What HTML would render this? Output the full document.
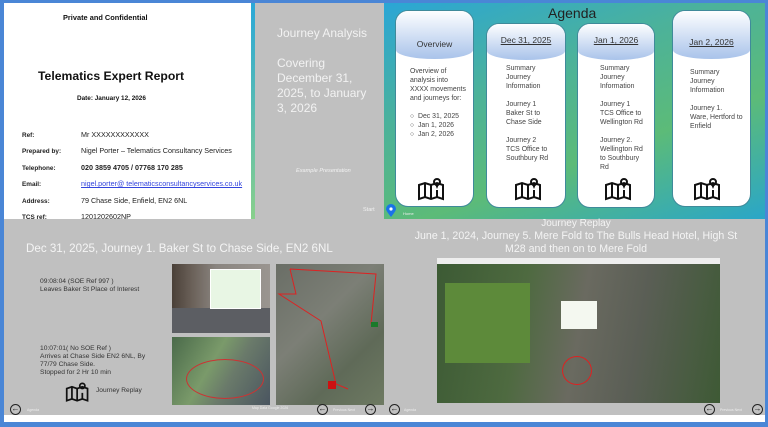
<!DOCTYPE html>
<html><head><meta charset="utf-8"><style>
*{margin:0;padding:0;box-sizing:border-box}
body{width:768px;height:427px;overflow:hidden;background:#4a86d6;font-family:"Liberation Sans",sans-serif;position:relative}
.a{position:absolute}
.s1{left:4px;top:3px;width:247px;height:219px;background:#fff}
.s1 .r{position:absolute;left:18px;font-size:7.2px;color:#222;white-space:nowrap}
.s1 .r b{display:inline-block;width:59px;font-size:6.4px}
.strip{left:251px;top:3px;width:4px;height:219px;background:linear-gradient(#2aa8d8,#8ad08a)}
.s2{left:255px;top:3px;width:129px;height:216px;background:#c0c0c0;color:#f2f2f2}
.s3{left:384px;top:3px;width:381px;height:216px;background:linear-gradient(160deg,#2aa6d6 0%,#4cb29a 35%,#5cbb78 65%,#2aa6c8 100%)}
.card{position:absolute;background:#fff;border:1px solid #3f8a9a;border-radius:13px;overflow:hidden}
.card .h{position:absolute;left:0;right:0;top:0;height:46px;background:linear-gradient(#fdfeff,#a9c3ea);border-radius:0 0 50% 50%/0 0 9px 9px}
.card .t{position:absolute;left:0;right:0;text-align:center;font-size:8.5px;color:#333}
.card .b{position:absolute;font-size:6.9px;color:#444;line-height:9px;white-space:nowrap}
.gray{left:4px;top:219px;width:761px;height:196px;background:#c0c0c0}
.white{left:4px;top:415px;width:761px;height:7px;background:#fff}
.arr{position:absolute;width:11px;height:11px;border:1.3px solid #222;border-radius:50%;font-size:8px;line-height:8px;text-align:center;color:#222;font-weight:bold}
.sm{position:absolute;font-size:3.5px;color:#eee}
</style></head><body>
<div class="a s1">
 <div class="a" style="left:59px;top:10px;font-size:7.4px;font-weight:bold;color:#111">Private and Confidential</div>
 <div class="a" style="left:34px;top:66px;font-size:12.2px;font-weight:bold;color:#111">Telematics Expert Report</div>
 <div class="a" style="left:73px;top:92px;font-size:6.4px;font-weight:bold;color:#111">Date: January 12, 2026</div>
 <div class="r" style="top:127px"><b>Ref:</b>Mr XXXXXXXXXXXX</div>
 <div class="r" style="top:143px"><b>Prepared by:</b>Nigel Porter – Telematics Consultancy Services</div>
 <div class="r" style="top:160px"><b>Telephone:</b><span style="font-weight:bold">020 3859 4705 / 07768 170 285</span></div>
 <div class="r" style="top:176px"><b>Email:</b><span style="color:#3344dd;text-decoration:underline">nigel.porter@ telematicsconsultancyservices.co.uk</span></div>
 <div class="r" style="top:193px"><b>Address:</b>79 Chase Side, Enfield, EN2 6NL</div>
 <div class="r" style="top:209px"><b>TCS ref:</b>1201202602NP</div>
</div>
<div class="a strip"></div>
<div class="a s2">
 <div class="a" style="left:22px;top:23px;font-size:12px">Journey Analysis</div>
 <div class="a" style="left:22px;top:53px;font-size:12px;line-height:15px;width:102px">Covering December 31, 2025, to January 3, 2026</div>
 <div class="a" style="left:41px;top:165px;font-size:5.6px;font-style:italic">Example Presentation</div>
 <div class="a" style="left:108px;top:204px;font-size:5.5px">Start</div>
</div>
<div class="a s3">
 <div class="a" style="left:164px;top:2px;font-size:14px;color:#222">Agenda</div>
 <div class="card" style="left:11px;top:7px;width:79px;height:197px"><div class="h" style="height:48px"></div><div class="t" style="top:28px">Overview</div>
  <div class="b" style="left:14px;top:56px">Overview of<br>analysis into<br>XXXX movements<br>and journeys for:<br><br>○&nbsp; Dec 31, 2025<br>○&nbsp; Jan 1, 2026<br>○&nbsp; Jan 2, 2026</div></div>
 <div class="card" style="left:102px;top:20px;width:80px;height:185px"><div class="h" style="height:36px"></div><div class="t" style="top:11px;text-decoration:underline">Dec 31, 2025</div>
  <div class="b" style="left:19px;top:40px">Summary<br>Journey<br>Information<br><br>Journey 1<br>Baker St to<br>Chase Side<br><br>Journey 2<br>TCS Office to<br>Southbury Rd</div></div>
 <div class="card" style="left:193px;top:20px;width:78px;height:185px"><div class="h" style="height:36px"></div><div class="t" style="top:11px;text-decoration:underline">Jan 1, 2026</div>
  <div class="b" style="left:22px;top:40px">Summary<br>Journey<br>Information<br><br>Journey 1<br>TCS Office to<br>Wellington Rd<br><br>Journey 2.<br>Wellington Rd<br>to Southbury<br>Rd</div></div>
 <div class="card" style="left:288px;top:7px;width:79px;height:197px"><div class="h" style="height:48px"></div><div class="t" style="top:26px;text-decoration:underline">Jan 2, 2026</div>
  <div class="b" style="left:17px;top:57px">Summary<br>Journey<br>Information<br><br>Journey 1.<br>Ware, Hertford to<br>Enfield</div></div>
 <svg class="a" style="left:33px;top:174px" width="30" height="24" viewBox="0 0 30 24"><g fill="none" stroke="#111" stroke-width="2"><path d="M2 8 L8 6 L14 8 L20 6 L26 8 V22 L20 20 L14 22 L8 20 L2 22 Z M8 6 V20 M14 8 V22 M20 13 V20"/><circle cx="20" cy="5" r="3"/></g><path d="M18 7 L20 12 L22 7Z" fill="#111"/></svg>
 <svg class="a" style="left:130px;top:174px" width="30" height="24" viewBox="0 0 30 24"><g fill="none" stroke="#111" stroke-width="2"><path d="M2 8 L8 6 L14 8 L20 6 L26 8 V22 L20 20 L14 22 L8 20 L2 22 Z M8 6 V20 M14 8 V22 M20 13 V20"/><circle cx="20" cy="5" r="3"/></g><path d="M18 7 L20 12 L22 7Z" fill="#111"/></svg>
 <svg class="a" style="left:220px;top:174px" width="30" height="24" viewBox="0 0 30 24"><g fill="none" stroke="#111" stroke-width="2"><path d="M2 8 L8 6 L14 8 L20 6 L26 8 V22 L20 20 L14 22 L8 20 L2 22 Z M8 6 V20 M14 8 V22 M20 13 V20"/><circle cx="20" cy="5" r="3"/></g><path d="M18 7 L20 12 L22 7Z" fill="#111"/></svg>
 <svg class="a" style="left:309px;top:174px" width="30" height="24" viewBox="0 0 30 24"><g fill="none" stroke="#111" stroke-width="2"><path d="M2 8 L8 6 L14 8 L20 6 L26 8 V22 L20 20 L14 22 L8 20 L2 22 Z M8 6 V20 M14 8 V22 M20 13 V20"/><circle cx="20" cy="5" r="3"/></g><path d="M18 7 L20 12 L22 7Z" fill="#111"/></svg>
 <svg class="a" style="left:2px;top:201px" width="10" height="13" viewBox="0 0 10 13"><path d="M5 13 C1 8 0 6 0 5 A5 5 0 0 1 10 5 C10 6 9 8 5 13Z" fill="#1a73e8"/><circle cx="5" cy="5" r="1.6" fill="#fff"/></svg>
 <div class="a" style="left:19px;top:208px;font-size:4px;color:#eee">Home</div>
</div>
<div class="a gray"></div>
<div class="a white"></div>
<div class="a" style="left:26px;top:242px;font-size:11.6px;color:#f4f4f4">Dec 31, 2025, Journey 1. Baker St to Chase Side, EN2 6NL</div>
<div class="a" style="left:40px;top:278px;font-size:6.7px;color:#333;line-height:8px">09:08:04 (SOE Ref 997 )<br>Leaves Baker St Place of Interest</div>
<div class="a" style="left:40px;top:345px;font-size:6.7px;color:#333;line-height:8px">10:07:01( No SOE Ref )<br>Arrives at Chase Side EN2 6NL, By<br>77/79 Chase Side.<br>Stopped for 2 Hr 10 min</div>
<svg class="a" style="left:65px;top:381px" width="26" height="22" viewBox="0 0 30 24"><g fill="none" stroke="#111" stroke-width="2"><path d="M2 8 L8 6 L14 8 L20 6 L26 8 V22 L20 20 L14 22 L8 20 L2 22 Z M8 6 V20 M14 8 V22 M20 13 V20"/><circle cx="20" cy="5" r="3"/></g></svg>
<div class="a" style="left:96px;top:387px;font-size:6.6px;color:#333">Journey Replay</div>
<div class="a" style="left:172px;top:264px;width:98px;height:69px;background:linear-gradient(90deg,#4a4038 0,#6a6058 20%,#8a8580 45%,#9a9590 100%)"><div class="a" style="left:0;top:44px;width:98px;height:25px;background:#5c5e63"></div><div class="a" style="left:38px;top:5px;width:51px;height:40px;background:#e8f6e4;border:1px solid #fff"></div></div>
<div class="a" style="left:172px;top:337px;width:98px;height:68px;background:linear-gradient(120deg,#4a6a4a,#7a9a6a 40%,#6a7a6a 60%,#4a5560)"><div class="a" style="left:14px;top:22px;width:78px;height:40px;border:1px solid #c33;border-radius:50%"></div></div>
<div class="a" style="left:276px;top:264px;width:108px;height:141px;background:linear-gradient(135deg,#6a6e66,#7c7f76 40%,#5f6a58 70%,#6e7a62)"><svg width="108" height="141"><path d="M14 5 L100 10 L95 60 M14 5 L20 30 L3 30 L45 57 L60 120 L72 125" fill="none" stroke="#d22" stroke-width="1"/><rect x="95" y="58" width="7" height="5" fill="#1a7a2a"/><rect x="52" y="117" width="8" height="8" fill="#c11"/></svg></div>
<div class="arr" style="left:10px;top:404px">←</div><div class="sm" style="left:27px;top:408px">Agenda</div>
<div class="sm" style="left:252px;top:406px">Map Data Google 2026</div>
<div class="arr" style="left:317px;top:404px">←</div><div class="sm" style="left:333px;top:408px">Previous Next</div><div class="arr" style="left:365px;top:404px">→</div>
<div class="a" style="left:386px;top:218px;width:380px;text-align:center;font-size:10px;color:#f4f4f4;line-height:12px">Journey Replay<br><span style="font-size:10.6px">June 1, 2024, Journey 5. Mere Fold to The Bulls Head Hotel, High St<br>M28 and then on to Mere Fold</span></div>
<div class="a" style="left:437px;top:258px;width:283px;height:145px;background:linear-gradient(100deg,#3c5a34 0,#4e6a40 30%,#6a6a60 50%,#5a5e55 70%,#3e5a35 100%)">
 <div class="a" style="left:0;top:0;width:283px;height:6px;background:#eee"></div>
 <div class="a" style="left:8px;top:25px;width:85px;height:80px;background:#5d8a3a"></div>
 <div class="a" style="left:124px;top:43px;width:36px;height:28px;background:#f4f8f0"></div>
 <div class="a" style="left:125px;top:98px;width:30px;height:29px;border:1px solid #d22;border-radius:50%"></div>
</div>
<div class="arr" style="left:389px;top:404px">←</div><div class="sm" style="left:404px;top:408px">Agenda</div>
<div class="arr" style="left:704px;top:404px">←</div><div class="sm" style="left:720px;top:408px">Previous Next</div><div class="arr" style="left:752px;top:404px">→</div>
</body></html>
